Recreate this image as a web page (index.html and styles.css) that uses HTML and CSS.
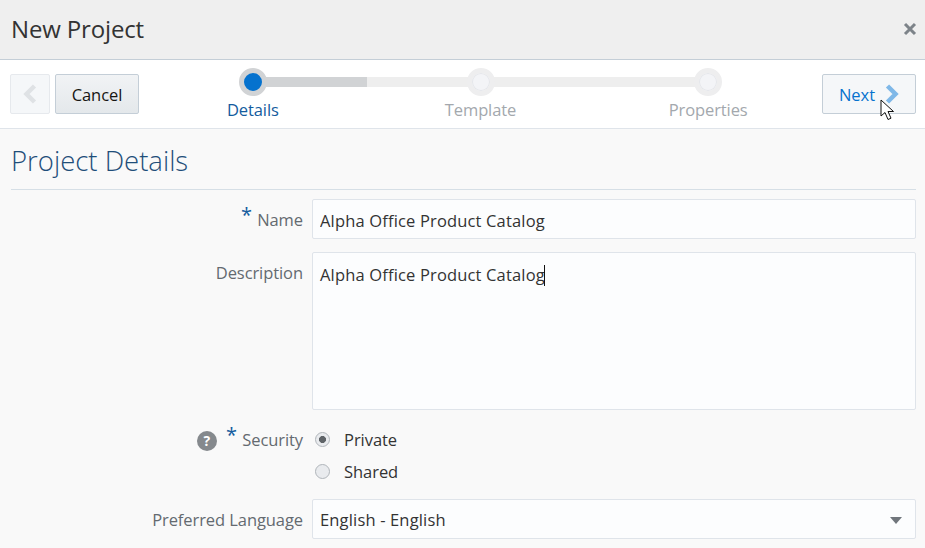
FILE: index.html
```html
<!DOCTYPE html>
<html lang="en">

<head>
    <meta charset="UTF-8">
    <title>New Project</title>
    <link rel="stylesheet" href="styles.css">
</head>

<body>
    <header class="dialog-header">
        <h1>New Project</h1>
        <button type="button" class="close" aria-label="Close">
            <svg width="14" height="14" viewBox="0 0 14 14"><path d="M2 2l10 10M12 2L2 12" /></svg>
        </button>
    </header>

    <div class="toolbar">
        <button type="button" class="btn btn-prev" aria-label="Back">
            <svg width="14" height="20" viewBox="0 0 14 20"><path d="M11.500 2L3.500 10l8 8" /></svg>
        </button>
        <button type="button" class="btn btn-cancel">Cancel</button>

        <ol class="train">
            <li class="step step-first">
                <span class="step-track"><span class="dot dot-active"></span></span>
                <span class="step-label step-label-active">Details</span>
            </li>
            <li class="step step-middle">
                <span class="step-track"><span class="dot"></span></span>
                <span class="step-label">Template</span>
            </li>
            <li class="step step-last">
                <span class="step-track"><span class="dot"></span></span>
                <span class="step-label">Properties</span>
            </li>
        </ol>

        <div class="next-wrapper">
            <button type="button" class="btn btn-next">
                Next
                <svg width="14" height="20" viewBox="0 0 14 20"><path d="M2.500 2l8 8-8 8" /></svg>
            </button>
            <svg class="cursor" width="16" height="24" viewBox="0 0 16 24">
                <path d="M1 1v16l4-3.500 3 7 3-1.300-3-6.700h5.500z" />
            </svg>
        </div>
    </div>

    <main class="content">
        <h2>Project Details</h2>

        <form class="form">
            <label class="form-label" for="name"><span class="req">*</span> Name</label>
            <input class="field" type="text" id="name" value="Alpha Office Product Catalog">

            <label class="form-label" for="description">Description</label>
            <div class="field field-area" id="description">Alpha Office Product Catalog<span class="caret"></span></div>

            <div class="form-label form-label-security">
                <span class="help">?</span>
                <span class="req">*</span> Security
            </div>
            <div class="radios">
                <div class="radio-row"><span class="radio radio-on"></span>Private</div>
                <div class="radio-row"><span class="radio"></span>Shared</div>
            </div>

            <label class="form-label" for="language">Preferred Language</label>
            <div class="field field-select" id="language">
                English - English
                <svg width="12" height="7" viewBox="0 0 12 7"><path d="M0 0h12L6 7z" /></svg>
            </div>
        </form>
    </main>
</body>

</html>
```

FILE: styles.css
```css
html,
body {
    height: 100%;
}

body {
    margin: 0;
    overflow: hidden;
    background: #f9f9f9;
    color: #333;
    font-family: "Open Sans", "Noto Sans", sans-serif;
    font-size: 16.5px;
    letter-spacing: 0.16px;
}

.dialog-header {
    display: flex;
    align-items: center;
    justify-content: space-between;
    height: 59px;
    padding: 0 8px 0 11px;
    background: #efefef;
    border-bottom: 1px solid #c4ced7;
}

h1 {
    margin: 0 0 3px;
    font-size: 24px;
    font-weight: 400;
    letter-spacing: -0.15px;
}

.close {
    display: flex;
    padding: 0;
    margin-bottom: 1px;
    border: 0;
    background: none;
}

.close path {
    fill: none;
    stroke: #7d8389;
    stroke-width: 3;
}

.toolbar {
    display: flex;
    height: 68px;
    padding: 0 9px 0 10px;
    background: #fff;
    border-bottom: 1px solid #dfe4ea;
}

.btn {
    display: flex;
    align-items: center;
    justify-content: center;
    height: 40px;
    margin-top: 14px;
    padding: 0;
    border: 1px solid #c4ced7;
    border-radius: 2px;
    font-family: inherit;
    font-size: inherit;
    letter-spacing: -0.05px;
}

.btn path {
    fill: none;
    stroke-width: 4.5;
}

.btn-prev {
    width: 40px;
    margin-right: 5px;
    background: #f5f7f9;
    border-color: #e6e9ed;
}

.btn-prev path {
    stroke: #dfe2e5;
}

.btn-cancel {
    width: 84px;
    background: linear-gradient(#f1f3f5, #e4e8eb);
    color: #161513;
}

.train {
    display: flex;
    flex: 1;
    margin: 0;
    padding: 0;
    list-style: none;
}

.step {
    display: flex;
    flex: 1;
    flex-direction: column;
    align-items: center;
    padding-top: 8px;
}

.step-track {
    display: flex;
    justify-content: center;
    align-self: stretch;
    background: linear-gradient(#eee, #eee) center / 100% 10px no-repeat;
}

.step-first .step-track {
    background:
        linear-gradient(#d1d3d5, #d1d3d5) right center / 50% 10px no-repeat;
}

.step-last .step-track {
    background-size: 50% 10px;
    background-position: left center;
}

.dot {
    box-sizing: border-box;
    width: 28px;
    height: 28px;
    background: #f3f4f7;
    border: 5px solid #eeeeef;
    border-radius: 50%;
    box-shadow: inset 0 0 0 1px #e4e6ea;
}

.dot-active {
    background: #0572ce;
    border-color: #d1d3d5;
    box-shadow: none;
}

.step-label {
    margin-top: 2px;
    line-height: 24px;
    color: #a3a8ad;
    letter-spacing: -0.1px;
}

.step-label-active {
    color: #145c9e;
}

.next-wrapper {
    position: relative;
    display: flex;
}

.btn-next {
    gap: 10px;
    width: 94px;
    background: #f5f7f9;
    color: #0572ce;
}

.btn-next path {
    stroke: #7fb8e8;
}

.cursor {
    position: absolute;
    left: 58px;
    top: 39px;
}

.cursor path {
    fill: #fff;
    stroke: #111;
    stroke-width: 1;
}

.content {
    padding: 0 9px 0 11px;
}

h2 {
    height: 60px;
    margin: 0;
    border-bottom: 1px solid #d6dfe6;
    font-size: 27.500px;
    font-weight: 300;
    line-height: 64px;
    color: #1f4e79;
    letter-spacing: 0;
}

.form {
    display: grid;
    grid-template-columns: 292px 1fr;
    column-gap: 9px;
    padding-top: 9px;
}

.form-label {
    line-height: 42px;
    text-align: right;
    color: #646a70;
    letter-spacing: -0.08px;
}

.req {
    position: relative;
    top: -4px;
    margin-right: 1px;
    font-size: 20px;
    line-height: 1;
    color: #145c9e;
}

.field {
    box-sizing: border-box;
    width: 100%;
    height: 40px;
    margin: 0 0 13px;
    padding: 0 7px;
    background: #fcfdfe;
    border: 1px solid #dfe4ea;
    border-radius: 2px;
    font-family: inherit;
    font-size: inherit;
    letter-spacing: inherit;
    line-height: 38px;
    color: #333;
}

input.field {
    padding-top: 2px;
}

.field-area {
    height: 158px;
    margin-bottom: 6px;
    line-height: 43px;
}

.caret {
    display: inline-block;
    width: 1px;
    height: 21px;
    margin-left: -1px;
    vertical-align: -5px;
    background: #111;
}

.form-label-security {
    line-height: 48px;
}

.help {
    display: inline-block;
    width: 20px;
    height: 20px;
    margin-right: 5px;
    background: #85898d;
    border-radius: 50%;
    font-size: 14px;
    font-weight: 700;
    line-height: 20px;
    text-align: center;
    color: #fff;
    letter-spacing: 0;
}

.radios {
    display: flex;
    flex-direction: column;
    height: 83px;
    padding-top: 7px;
    box-sizing: border-box;
}

.radio-row {
    display: flex;
    align-items: center;
    gap: 14px;
    height: 32px;
    padding-left: 3px;
    color: #333;
    letter-spacing: -0.05px;
}

.radio {
    box-sizing: border-box;
    width: 15px;
    height: 15px;
    background: #e9ebee;
    border: 1px solid #b0b5ba;
    border-radius: 50%;
}

.radio-on {
    background: radial-gradient(circle, #5f6468 0 3.2px, #e9ebee 3.8px);
}

.field-select {
    display: flex;
    align-items: center;
    justify-content: space-between;
    padding-top: 2px;
    padding-right: 13px;
    margin-bottom: 0;
}

.field-select path {
    fill: #70767c;
}
```
